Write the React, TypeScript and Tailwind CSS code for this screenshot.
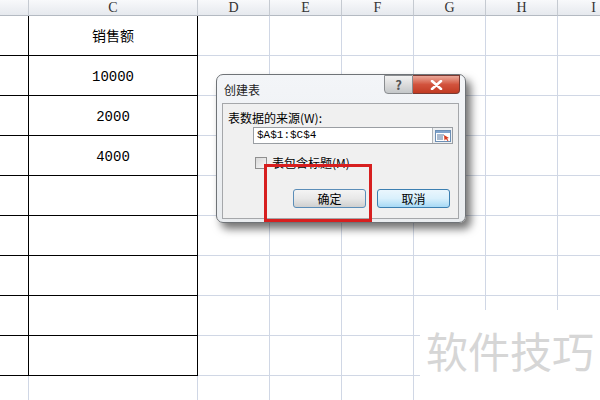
import { ReactNode } from 'react';

const cols = [
  { label: '', w: 'w-[29px]' },
  { label: 'C', w: 'w-[169px]' },
  { label: 'D', w: 'w-[72px]' },
  { label: 'E', w: 'w-[72px]' },
  { label: 'F', w: 'w-[72px]' },
  { label: 'G', w: 'w-[72px]' },
  { label: 'H', w: 'w-[72px]' },
  { label: 'I', w: 'w-[72px]' },
];

const cells = ['销售额', '10000', '2000', '4000', '', '', '', '', ''];

function Row({ value, boxed }: { value: string; boxed: boolean }) {
  const dark = 'border-r border-b border-black';
  const light = 'border-r border-b border-[#d0d7e5]';
  return (
    <div className="flex h-[40px] shrink-0">
      <div className={`w-[29px] shrink-0 ${boxed ? dark : light}`} />
      <div
        className={`w-[169px] shrink-0 flex items-center justify-center pt-[3px] text-[14px] text-black ${boxed ? dark : light}`}
        style={{ fontFamily: '"Liberation Mono", "Noto Sans CJK SC", monospace' }}
      >
        {value}
      </div>
      {cols.slice(2).map((c) => (
        <div key={c.label} className={`${c.w} shrink-0 ${light}`} />
      ))}
    </div>
  );
}

function Btn({ children, blue }: { children: ReactNode; blue?: boolean }) {
  return (
    <div
      className={`w-[73px] h-[19px] rounded-[3px] border flex items-center justify-center text-[12px] text-black ${
        blue
          ? 'border-[#3c7fb1] bg-gradient-to-b from-[#eaf6fd] via-[#d9f0fc] to-[#a7d9f5]'
          : 'border-[#5b8db8] bg-gradient-to-b from-[#f4f4f4] via-[#e8e8e8] to-[#cfcfcf]'
      }`}
    >
      {children}
    </div>
  );
}

function RefIcon() {
  return (
    <svg width="16" height="12" viewBox="0 0 16 12">
      <rect x="0.5" y="0.5" width="15" height="11" fill="#fff" stroke="#6d8fb5" />
      <rect x="1" y="1" width="14" height="2" fill="#7fa3cc" />
      <line x1="2" y1="5" x2="9" y2="5" stroke="#5577a0" />
      <line x1="2" y1="7" x2="8" y2="7" stroke="#5577a0" />
      <line x1="2" y1="9" x2="8" y2="9" stroke="#5577a0" />
      <path d="M9 5 L14 8 L12 8.5 L13.5 10.5 L12.5 11 L11 9 L9.5 10.5 Z" fill="#d63b1f" />
    </svg>
  );
}

export default function App() {
  return (
    <div
      className="relative w-[600px] h-[400px] overflow-hidden bg-white"
      style={{ fontFamily: '"Noto Sans CJK SC", sans-serif' }}
    >
      {/* sheet */}
      <div className="flex flex-col">
        <div className="flex h-[16px] shrink-0">
          {cols.map((c, i) => (
            <div
              key={i}
              className={`${c.w} shrink-0 border-r border-b border-r-[#c5cad1] border-b-[#b4bac2] bg-gradient-to-b from-[#f8f9fb] to-[#e6e9ee] flex items-center justify-center text-[14px] leading-none text-[#333]`}
              style={{ fontFamily: '"Liberation Serif", serif' }}
            >
              {c.label}
            </div>
          ))}
        </div>
        {cells.map((v, i) => (
          <Row key={i} value={v} boxed />
        ))}
        <Row value="" boxed={false} />
      </div>

      {/* dialog */}
      <div className="absolute left-[216px] top-[74px] w-[250px] h-[149px] rounded-[7px] border border-[#6f7377] bg-gradient-to-b from-[#f3f5f8] to-[#e9ecef] shadow-[5px_6px_8px_rgba(0,0,0,0.55)] flex flex-col">
        <div className="flex h-[28px] shrink-0">
          <div className="pl-[7px] pt-[6px] text-[12px] text-[#222]">创建表</div>
          <div className="ml-auto mr-[5px] flex h-[19px]">
            <div className="w-[29px] h-[19px] rounded-bl-[4px] border border-[#8a8d90] bg-gradient-to-b from-[#f2f2f2] via-[#dcdcdc] to-[#c4c7c9] flex items-center justify-center text-[13px] font-bold leading-none text-[#555]">
              ?
            </div>
            <div className="w-[47px] h-[19px] rounded-br-[4px] border border-l-0 border-[#7a3a32] bg-gradient-to-b from-[#e9a799] via-[#d2533d] to-[#c13a22] flex items-center justify-center">
              <svg width="13" height="10" viewBox="0 0 13 10">
                <path d="M2 1 L11 9 M11 1 L2 9" stroke="#fff" strokeWidth="2.6" strokeLinecap="round" />
              </svg>
            </div>
          </div>
        </div>
        <div className="ml-[5px] mr-[6px] mb-[3px] flex-1 border border-[#a5a7aa] bg-[#f0f0f0] flex flex-col">
          <div className="pl-[5px] pt-[7px] text-[12px] leading-[14px] text-black">表数据的来源(W):</div>
          <div className="ml-[30px] mr-[5px] mt-[2px] h-[17px] border border-[#9a9ea3] bg-white flex items-center">
            <span
              className="pl-[3px] text-[11px] text-black"
              style={{ fontFamily: '"Liberation Mono", monospace' }}
            >
              $A$1:$C$4
            </span>
            <div className="ml-auto w-[20px] h-[15px] border-l border-[#b0b4b8] bg-[#eef0f2] flex items-center justify-center">
              <RefIcon />
            </div>
          </div>
          <div className="ml-[32px] mt-[12px] flex items-center gap-[5px]">
            <div className="w-[12px] h-[12px] border border-[#8f8f8f] bg-gradient-to-br from-[#d8d8d8] to-[#fafafa]" />
            <span className="text-[12px] leading-[14px] text-black">表包含标题(M)</span>
          </div>
          <div className="ml-[70px] mt-[19px] flex gap-[11px]">
            <Btn>确定</Btn>
            <Btn blue>取消</Btn>
          </div>
        </div>
      </div>

      {/* red highlight */}
      <div className="absolute left-[264px] top-[164px] w-[108px] h-[58px] border-[3px] border-[#d71f1f]" />

      {/* watermark */}
      <div className="absolute left-[420px] top-[310px] w-[180px] h-[90px] bg-white">
        <div className="pl-[6px] pt-[19px] text-[42px] leading-none text-[#d6d6d6]">软件技巧</div>
      </div>
    </div>
  );
}
